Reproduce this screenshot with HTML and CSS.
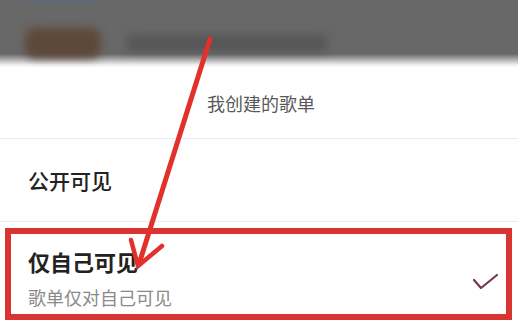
FILE: index.html
```html
<!DOCTYPE html>
<html lang="zh-CN">
<head>
    <meta charset="UTF-8">
    <meta name="viewport" content="width=device-width, initial-scale=1.0">
    <title>歌单隐私设置</title>
    <link rel="stylesheet" href="styles.css">
</head>
<body>
    <div class="backdrop">
        <div class="blur-line"></div>
        <div class="blur-row">
            <div class="blur-cover"></div>
            <div class="blur-text"></div>
        </div>
    </div>

    <div class="sheet">
        <div class="sheet-title">我创建的歌单</div>
        <div class="option">
            <div class="option-name">公开可见</div>
        </div>
        <div class="option option-marked">
            <div class="option-body">
                <div class="option-name bold">仅自己可见</div>
                <div class="option-desc">歌单仅对自己可见</div>
            </div>
            <svg class="check" width="28" height="20" viewBox="0 0 28 20">
                <polyline points="2,8 9,16 25,3" fill="none" stroke="#7d3452" stroke-width="2.2" stroke-linecap="round" stroke-linejoin="round"/>
            </svg>
        </div>
    </div>

    <!-- annotation arrow -->
    <svg class="arrow" width="518" height="334" viewBox="0 0 518 334">
        <g stroke="#e2302b" stroke-width="5" stroke-linecap="round" fill="none">
            <line x1="210" y1="39" x2="139" y2="264"/>
            <polyline points="131,240 138,266 162,246" stroke-width="4.5" stroke-linejoin="miter"/>
        </g>
    </svg>
</body>
</html>
```

FILE: styles.css
```css
body {
    margin: 0;
    width: 518px;
    height: 334px;
    overflow: hidden;
    background: #fff;
    font-family: "Noto Sans CJK SC", "Noto Sans", sans-serif;
    position: relative;
}
.backdrop {
    height: 68px;
    background: linear-gradient(#686868 0, #686868 54px, #f2f2f2 65px, #fff 68px);
    overflow: hidden;
}
.blur-line {
    width: 70px;
    height: 3px;
    margin-left: 25px;
    background: #5c6878;
    filter: blur(1.5px);
}
.blur-row {
    display: flex;
    align-items: center;
    gap: 26px;
    padding: 25px 0 0 25px;
}
.blur-cover {
    width: 76px;
    height: 30px;
    border-radius: 10px;
    background: #5e4839;
    filter: blur(4px);
}
.blur-text {
    width: 200px;
    height: 16px;
    background: #555;
    filter: blur(5px);
}
.sheet {
    background: #fff;
}
.sheet-title {
    height: 70px;
    display: flex;
    align-items: center;
    justify-content: center;
    padding-left: 4px;
    font-size: 18px;
    color: #595959;
    border-bottom: 1px solid #ececec;
}
.option {
    height: 82px;
    display: flex;
    align-items: center;
    padding-left: 28px;
    border-bottom: 1px solid #ececec;
}
.option-name {
    font-size: 21px;
    color: #222;
    font-weight: 500;
}
.option-name.bold {
    font-weight: 700;
    font-size: 22px;
    line-height: 30px;
}
.option-marked {
    height: auto;
    border: 6px solid #d93431;
    margin: 6px 6px 0 5px;
    padding: 12px 6px 4px 17px;
    justify-content: space-between;
}
.option-desc {
    margin-top: 8px;
    font-size: 18px;
    line-height: 26px;
    color: #8a8a8a;
}
.check {
    margin-top: 8px;
}
.arrow {
    position: absolute;
    top: 0;
    left: 0;
    pointer-events: none;
}
```
